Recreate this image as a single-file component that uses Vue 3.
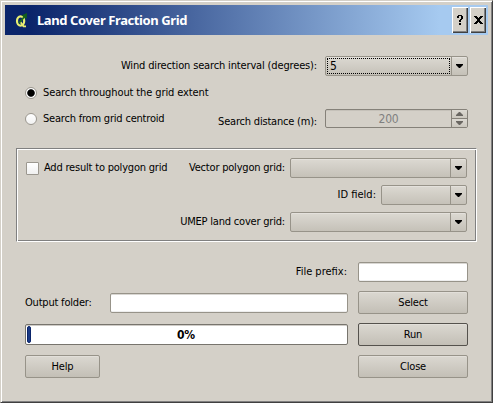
<script setup>
import { ref } from 'vue'

const mode = ref('extent')
</script>

<template>
  <div class="window">
    <header class="titlebar">
      <svg class="logo" width="13" height="15" viewBox="0 0 13 15">
        <ellipse cx="5.6" cy="8" rx="3.6" ry="4.6" fill="none" stroke="#e9ee72" stroke-width="2.2" />
        <path d="M5.5 9 L8.5 13.3 L11 13.3" fill="none" stroke="#e9ee72" stroke-width="1.8" />
        <path d="M4 10 L10 3.2" fill="none" stroke="#1d6b1c" stroke-width="1.8" />
        <path d="M6.5 2.5 L12 0 L11.6 6 Z" fill="#12601a" />
      </svg>
      <h1 class="title">Land Cover Fraction Grid</h1>
      <div class="caption-btn">
        <svg width="16" height="26" viewBox="0 0 16 26" shape-rendering="crispEdges">
          <path d="M6 8h4v1h1v3h-1v1h-1v2h-2v-2h1v-1h1v-3h-2v2h-2v-2h1z M7 16h2v2h-2z" fill="#000" />
        </svg>
      </div>
      <div class="caption-btn">
        <svg width="16" height="26" viewBox="0 0 16 26" shape-rendering="crispEdges">
          <path d="M4 9h3v1h1v1h1v-1h1v-1h3v1h-1v1h-1v1h-1v2h1v1h1v1h1v1h-3v-1h-1v-1h-1v1h-1v1h-3v-1h1v-1h1v-1h1v-2h-1v-1h-1v-1h-1z" fill="#000" />
        </svg>
      </div>
    </header>

    <main class="body">
      <div class="row interval">
        <span class="label t-wind">Wind direction search interval (degrees):</span>
        <div class="combo wide focused"><span class="value">5</span><i class="drop"></i></div>
      </div>

      <div class="row extent" @click="mode = 'extent'">
        <i class="radio" :class="{ on: mode === 'extent' }"></i>
        <span class="t-extent">Search throughout the grid extent</span>
      </div>

      <div class="row distance">
        <div class="option" @click="mode = 'centroid'">
          <i class="radio" :class="{ on: mode === 'centroid' }"></i>
          <span>Search from grid centroid</span>
        </div>
        <span class="label low">Search distance (m):</span>
        <div class="spin">
          <span class="number">200</span>
          <div class="steps"><i class="up"></i><i class="down"></i></div>
        </div>
      </div>

      <section class="group">
        <div class="row">
          <i class="check"></i>
          <span>Add result to polygon grid</span>
          <span class="label">Vector polygon grid:</span>
          <div class="combo mid"><span class="value"></span><i class="drop"></i></div>
        </div>
        <div class="row">
          <span class="label loose">ID field:</span>
          <div class="combo small"><span class="value"></span><i class="drop"></i></div>
        </div>
        <div class="row">
          <span class="label">UMEP land cover grid:</span>
          <div class="combo mid"><span class="value"></span><i class="drop"></i></div>
        </div>
      </section>

      <div class="row prefix">
        <span class="label loose">File prefix:</span>
        <div class="field short"></div>
      </div>
      <div class="row output">
        <span>Output folder:</span>
        <div class="field long"></div>
        <div class="button">Select</div>
      </div>
      <div class="row run">
        <div class="progress"><i class="chunk"></i><b>0%</b></div>
        <div class="button default">Run</div>
      </div>
      <div class="row foot">
        <div class="button help">Help</div>
        <div class="button">Close</div>
      </div>
    </main>
  </div>
</template>

<style>
body {
  margin: 0;
  background: #d4d0c8;
}
</style>

<style scoped>
* {
  box-sizing: border-box;
}
.window {
  width: 493px;
  height: 403px;
  padding: 3px;
  overflow: hidden;
  background: #d4d0c8;
  border: 1px solid;
  border-color: #d4d0c8 #404040 #404040 #d4d0c8;
  box-shadow: inset 1px 1px #fff, inset -1px -1px #808080;
  font: 11px/14px "DejaVu Sans Condensed", "DejaVu Sans", sans-serif;
  font-stretch: condensed;
  letter-spacing: -0.2px;
  color: #000;
  white-space: nowrap;
  cursor: default;
}
.titlebar {
  display: flex;
  align-items: center;
  height: 30px;
  margin: 1px;
  padding: 0 2px 0 10px;
  background: linear-gradient(90deg, #0a246a 0, #0a246a 5%, #a6caf0 90%);
}
.logo {
  flex: none;
  margin-right: 9px;
}
.title {
  flex: 1;
  margin: 0;
  font: bold 13px/16px "Noto Sans", sans-serif;
  letter-spacing: -0.4px;
  color: #fff;
}
.caption-btn {
  width: 16px;
  height: 26px;
  background: #d4d0c8;
  box-shadow: inset 1px 1px #fff, inset -1px -1px #404040, inset -2px -2px #808080;
}
.caption-btn + .caption-btn {
  margin-left: 2px;
}
.caption-btn svg {
  display: block;
}
.body {
  padding: 20px 20px 0 21px;
  width: 484px;
}
.row {
  display: flex;
  align-items: center;
}
.label {
  margin-left: auto;
  margin-right: 8px;
}
.t-wind {
  letter-spacing: -0.15px;
}
.t-extent {
  letter-spacing: -0.11px;
}
.interval {
  height: 20px;
}
.extent {
  height: 14px;
  margin-top: 10px;
}
.distance {
  height: 19px;
  margin-top: 9px;
}
.option {
  display: flex;
  align-items: center;
}
.low {
  position: relative;
  top: 3px;
}
.radio {
  width: 12px;
  height: 12px;
  margin-right: 6px;
  border: 1px solid #9b978f;
  border-radius: 50%;
  background: linear-gradient(#fff, #f2f2f2);
}
.radio.on {
  background: radial-gradient(circle, #000 3.3px, #fff 4.2px);
}
.check {
  width: 13px;
  height: 13px;
  margin-right: 5px;
  border: 1px solid #9b978f;
  border-radius: 1px;
  background: linear-gradient(#fff, #f0f0f0);
}
.combo {
  display: flex;
  height: 20px;
  border: 1px solid #979389;
  border-radius: 2px;
  background: linear-gradient(#dcd9d2, #c5c1b8);
  box-shadow: inset 0 1px #e4e1dc;
}
.wide {
  width: 143px;
}
.mid {
  width: 177px;
}
.small {
  width: 86px;
}
.value {
  flex: 1;
  margin: 1px;
  padding: 0 3px;
  line-height: 16px;
}
.focused .value {
  border: 1px dotted #000;
  line-height: 15px;
  padding: 0 2px;
}
.focused .value,
.number {
  font-size: 12px;
}
.drop {
  display: flex;
  align-items: center;
  justify-content: center;
  width: 16px;
  border-left: 1px solid #979389;
}
.drop::before {
  content: "";
  width: 7px;
  height: 4px;
  background: #000;
  clip-path: polygon(0 0, 100% 0, 100% 25%, 57% 100%, 43% 100%, 0 25%);
}
.spin {
  display: flex;
  width: 143px;
  height: 19px;
  border: 1px solid #858179;
  border-radius: 2px;
  background: #d4d0c8;
  box-shadow: inset 0 1px #c5c1b9;
}
.number {
  flex: 1;
  line-height: 18px;
  text-align: center;
  color: #808080;
}
.steps {
  width: 16px;
  border-left: 1px solid #858179;
}
.steps i {
  display: flex;
  align-items: center;
  justify-content: center;
  height: 9px;
  background: linear-gradient(#dcd9d2, #cbc7be);
}
.steps .down {
  height: 8px;
}
.steps .up {
  border-bottom: 1px solid #858179;
}
.steps i::before {
  content: "";
  width: 7px;
  height: 4px;
  background: #6a6762;
  clip-path: polygon(0 0, 100% 0, 100% 25%, 57% 100%, 43% 100%, 0 25%);
}
.steps .up::before {
  transform: scaleY(-1);
}
.group {
  display: flex;
  flex-direction: column;
  gap: 7px;
  width: 461px;
  height: 94px;
  margin: 20px -9px 0;
  padding: 9px 9px 0;
  border: 1px solid;
  border-color: #808080 #fff #fff #808080;
  box-shadow: inset 1px 1px #fff, inset -1px -1px #808080;
}
.group .row {
  height: 20px;
}
.group .label {
  margin-right: 5px;
}
.prefix {
  height: 20px;
  margin-top: 20px;
}
.prefix .label {
  margin-right: 11px;
}
.row .loose {
  letter-spacing: 0;
}
.field {
  height: 20px;
  border: 1px solid #979389;
  border-radius: 2px;
  background: #fff;
  box-shadow: inset 0 1px #d9d7d3, inset 0 -1px #eee;
}
.short {
  width: 110px;
}
.long {
  width: 238px;
  margin-left: auto;
}
.output {
  height: 23px;
  margin-top: 9px;
}
.run,
.foot {
  height: 23px;
  margin-top: 9px;
}
.button {
  width: 110px;
  height: 23px;
  margin-left: 10px;
  border: 1px solid #979389;
  border-radius: 2px;
  background: linear-gradient(#dbd8d1, #c3bfb6);
  box-shadow: inset 0 1px #e2dfd9;
  text-align: center;
  line-height: 21px;
}
.default {
  border-color: #55524d;
}
.progress {
  display: flex;
  align-items: center;
  width: 323px;
  height: 21px;
  padding: 1px;
  border: 1px solid #77746d;
  border-radius: 2px;
  background: #fff;
  box-shadow: inset 0 1px #cfccc7;
}
.chunk {
  width: 4px;
  height: 17px;
  border: 1px solid #0a246a;
  border-radius: 2px;
  background: #1b3a85;
}
.progress b {
  flex: 1;
  padding-right: 5px;
  font-size: 12px;
  text-align: center;
}
.help {
  width: 75px;
  margin: 0 auto 0 0;
}
</style>
